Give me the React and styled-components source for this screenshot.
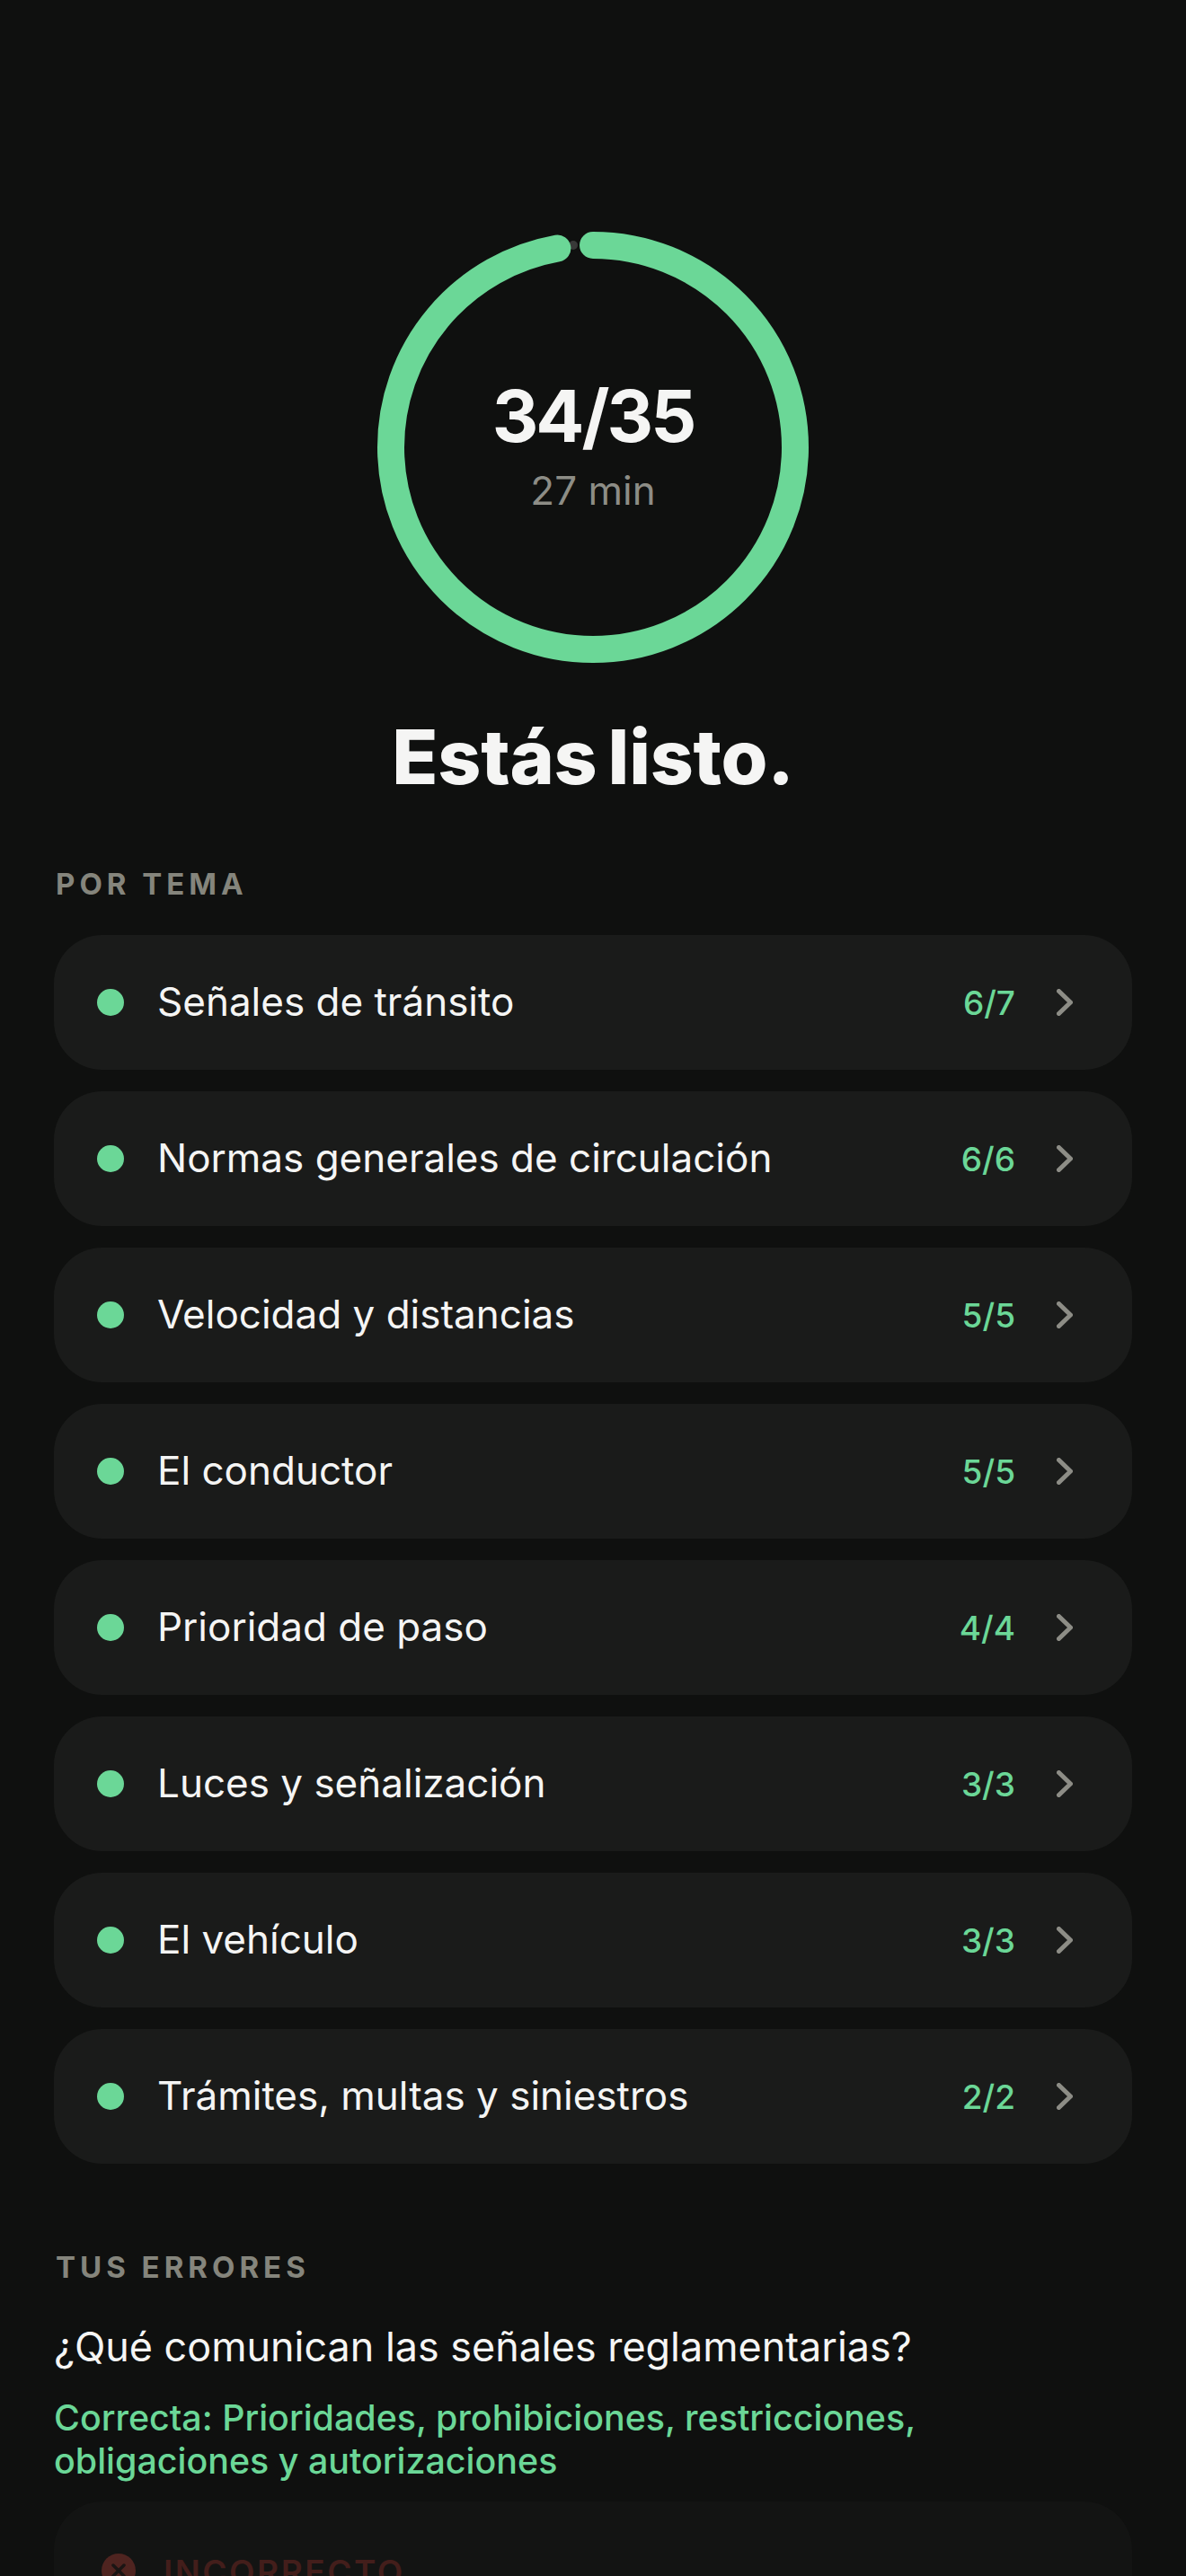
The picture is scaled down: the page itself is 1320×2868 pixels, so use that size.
import React from "react";
import styled, { createGlobalStyle } from "styled-components";

const GREEN = "#6bd797";
const FONT = `Inter, "Liberation Sans", Arial, sans-serif`;

const GlobalStyle = createGlobalStyle`
  html, body {
    margin: 0;
    padding: 0;
    background: #0f100f;
  }
`;

const Page = styled.main`
  width: 1320px;
  height: 2868px;
  overflow: hidden;
  background: #0f100f;
  font-family: ${FONT};
  box-sizing: border-box;
  padding: 258px 60px 0;
`;

const Hero = styled.section`
  display: flex;
  flex-direction: column;
  align-items: center;
`;

const RingWrap = styled.div`
  position: relative;
  width: 480px;
  height: 480px;
`;

const RingText = styled.div`
  position: absolute;
  inset: 0;
  display: flex;
  flex-direction: column;
  align-items: center;
  justify-content: center;
  padding-bottom: 5px;
`;

const Score = styled.div`
  font-size: 80px;
  line-height: 92px;
  font-weight: 700;
  letter-spacing: -3px;
  color: #f5f5f4;
`;

const Time = styled.div`
  margin-top: 9px;
  font-size: 44px;
  line-height: 56px;
  color: #8d8d86;
`;

const Title = styled.h1`
  margin: 55px 0 0;
  font-size: 84px;
  line-height: 100px;
  font-weight: 800;
  letter-spacing: -0.25px;
  word-spacing: -6px;
  color: #f5f5f4;
`;

const SectionLabel = styled.h2`
  margin: ${(p) => p.$top}px 2px 0;
  font-size: 33px;
  line-height: 40px;
  font-weight: 700;
  letter-spacing: 5px;
  color: #85857c;
`;

const TopicList = styled.ul`
  list-style: none;
  margin: 37px 0 0;
  padding: 0;
  display: flex;
  flex-direction: column;
  gap: 24px;
`;

const TopicRow = styled.li`
  height: 150px;
  border-radius: 54px;
  background: #1a1b1a;
  display: flex;
  align-items: center;
  padding: 0 66px 0 48px;
`;

const Dot = styled.span`
  width: 30px;
  height: 30px;
  border-radius: 50%;
  background: ${GREEN};
  flex: none;
`;

const TopicName = styled.span`
  flex: 1;
  margin-left: 37px;
  margin-bottom: 2px;
  font-size: 44px;
  line-height: 52px;
  color: #f5f5f4;
`;

const Count = styled.span`
  font-size: 37px;
  font-weight: 500;
  color: ${GREEN};
  margin-right: 46px;
`;

const Question = styled.p`
  margin: 39px 0 0;
  font-size: 44.9px;
  line-height: 60px;
  color: #f5f5f4;
`;

const Answer = styled.p`
  margin: 25px 0 0;
  max-width: 1000px;
  font-size: 39.4px;
  line-height: 48px;
  font-weight: 500;
  color: ${GREEN};
`;

const WrongCard = styled.div`
  margin-top: 21px;
  height: 200px;
  border-radius: 54px;
  background: #131413;
  padding: 58px 53px;
  display: flex;
  align-items: flex-start;
  gap: 31px;
`;

const WrongIcon = styled.span`
  width: 38px;
  height: 38px;
  border-radius: 50%;
  background: #4f2420;
  color: #1a1514;
  display: flex;
  align-items: center;
  justify-content: center;
  flex: none;
`;

const WrongLabel = styled.span`
  margin-top: 2px;
  font-size: 37px;
  line-height: 38px;
  font-weight: 600;
  letter-spacing: 2.5px;
  color: #431e1b;
`;

const topics = [
  ["Señales de tránsito", "6/7"],
  ["Normas generales de circulación", "6/6"],
  ["Velocidad y distancias", "5/5"],
  ["El conductor", "5/5"],
  ["Prioridad de paso", "4/4"],
  ["Luces y señalización", "3/3"],
  ["El vehículo", "3/3"],
  ["Trámites, multas y siniestros", "2/2"],
];

function Ring() {
  const r = 225;
  const c = 2 * Math.PI * r;
  const filled = c * (34 / 35);
  return (
    <svg width="480" height="480" viewBox="0 0 480 480">
      <circle cx="218" cy="15" r="5" fill="#383938" />
      <circle
        cx="240"
        cy="240"
        r={r}
        fill="none"
        stroke={GREEN}
        strokeWidth="30"
        strokeLinecap="round"
        strokeDasharray={`${filled} ${c}`}
        transform="rotate(-90 240 240)"
      />
    </svg>
  );
}

function Chevron() {
  return (
    <svg width="18" height="30" viewBox="0 0 18 30" fill="none">
      <path d="M2.5 2.5 L15.5 15 L2.5 27.5" stroke="#8d8d86" strokeWidth="5" strokeLinecap="round" strokeLinejoin="round" />
    </svg>
  );
}

export default function App() {
  return (
    <Page>
      <GlobalStyle />
      <Hero>
        <RingWrap>
          <Ring />
          <RingText>
            <Score>34/35</Score>
            <Time>27 min</Time>
          </RingText>
        </RingWrap>
        <Title>Estás listo.</Title>
      </Hero>

      <SectionLabel $top={71}>POR TEMA</SectionLabel>
      <TopicList>
        {topics.map(([name, count]) => (
          <TopicRow key={name}>
            <Dot />
            <TopicName>{name}</TopicName>
            <Count>{count}</Count>
            <Chevron />
          </TopicRow>
        ))}
      </TopicList>

      <SectionLabel $top={95}>TUS ERRORES</SectionLabel>
      <Question>¿Qué comunican las señales reglamentarias?</Question>
      <Answer>Correcta: Prioridades, prohibiciones, restricciones, obligaciones y autorizaciones</Answer>
      <WrongCard>
        <WrongIcon>
          <svg width="20" height="20" viewBox="0 0 20 20" fill="none">
            <path d="M4 4 L16 16 M16 4 L4 16" stroke="currentColor" strokeWidth="3.5" strokeLinecap="round" />
          </svg>
        </WrongIcon>
        <WrongLabel>INCORRECTO</WrongLabel>
      </WrongCard>
    </Page>
  );
}
